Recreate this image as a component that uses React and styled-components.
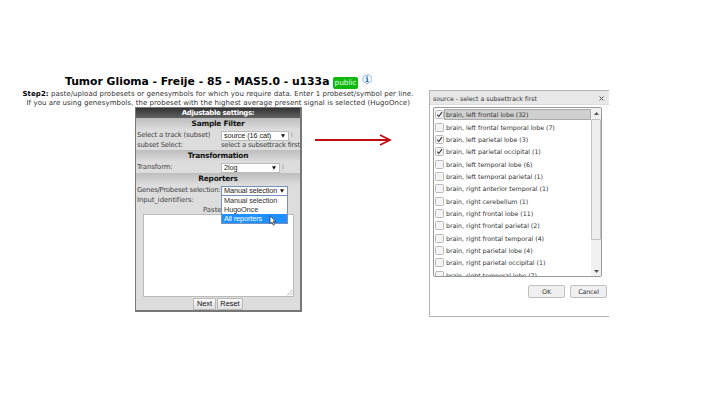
import React from 'react';
import styled, { createGlobalStyle } from 'styled-components';

const GlobalStyle = createGlobalStyle`
  * { box-sizing: border-box; }
  body { margin: 0; background: #fff; overflow: hidden; font-family: "DejaVu Sans", Verdana, sans-serif; }
`;

const Page = styled.main`
  width: 720px;
  height: 416px;
  display: flex;
  align-items: flex-start;
  white-space: nowrap;
`;
const StepColumn = styled.section`
  width: 300px;
  margin-left: 15px;
  padding-top: 73px;
  display: flex;
  flex-direction: column;
`;
const TitleRow = styled.header`
  height: 17px;
  margin-left: 50px;
  display: flex;
  align-items: center;
`;
const Title = styled.h1`
  margin: 0;
  font-size: 10.8px;
  line-height: 17px;
  width: 265px;
  flex: none;
`;
const Badge = styled.span`
  flex: none;
  width: 25px;
  height: 12px;
  margin: 2px 4px 0 3px;
  border-radius: 2px;
  background: #0eb80e;
  color: #e4ffe2;
  font-size: 7.4px;
  line-height: 12px;
  text-align: center;
  letter-spacing: -0.05px;
`;
const InfoIcon = styled.svg`
  flex: none;
  width: 10px;
  height: 11px;
  margin-bottom: 4px;
`;
const Line = styled.p`
  margin: 0 0 0 ${p => p.$indent}px;
  height: 8.6px;
  line-height: 9.6px;
  font-size: 7px;
  color: #333;
  letter-spacing: 0.058px;
  b { color: #000; }
`;
const Panel = styled.form`
  width: 167px;
  height: 205px;
  margin: 0 0 0 120px;
  border: 1px solid #777;
  border-width: 1px 2px 2px 1px;
  background: #ddd;
  display: flex;
  flex-direction: column;
`;
const Heading = styled.h2`
  margin: 0;
  flex: none;
  height: ${p => (p.$dark ? 10 : 12)}px;
  line-height: ${p => (p.$dark ? 10 : 12)}px;
  text-align: center;
  font-size: ${p => (p.$dark ? 7 : 7.4)}px;
  letter-spacing: ${p => (p.$dark ? -0.36 : -0.22)}px;
  color: ${p => (p.$dark ? '#fff' : '#111')};
  background: ${p => (p.$dark ? 'linear-gradient(#333, #626262)' : 'linear-gradient(#bdbdbd, #ddd)')};
`;
const Field = styled.div`
  flex: none;
  height: ${p => p.$h}px;
  padding-left: 1px;
  display: flex;
  align-items: center;
  font-size: 6.9px;
  line-height: 9px;
  color: #444;
`;
const Label = styled.label`
  width: 84px;
  flex: none;
  letter-spacing: ${p => p.$track ?? -0.2}px;
`;
const Value = styled.span`
  letter-spacing: -0.24px;
`;
const Hint = styled.span`
  color: #888;
`;
const Select = styled.div`
  position: relative;
  flex: none;
  width: ${p => p.$w}px;
  height: 10px;
  margin-right: 2px;
  padding: 0 3px 0 2px;
  border: 1px solid ${p => (p.$focus ? '#7890bd' : '#bbb')};
  background: #fff;
  color: #222;
  font-family: "Liberation Sans", Arial, sans-serif;
  font-size: 7.3px;
  letter-spacing: -0.1px;
  line-height: 8px;
  display: flex;
  align-items: center;
  justify-content: space-between;
`;
const Caret = styled.svg`
  flex: none;
  width: 4px;
  height: 4px;
`;
const Options = styled.ul`
  position: absolute;
  z-index: 2;
  left: -1px;
  top: 8px;
  width: 67px;
  margin: 0;
  padding: 0;
  list-style: none;
  background: #fff;
  border: 1px solid #7890bd;
`;
const Option = styled.li`
  height: 9px;
  padding-left: 2px;
  line-height: 9px;
  color: ${p => (p.$active ? '#fff' : '#333')};
  background: ${p => (p.$active ? '#1e90ff' : '#fff')};
`;
const Pointer = styled.svg`
  position: absolute;
  z-index: 3;
  left: 47px;
  top: 28px;
  width: 8px;
  height: 11px;
`;
const PasteRow = styled.div`
  flex: none;
  height: 9px;
  padding: 1px 0 0 67px;
  font-size: 6.9px;
  line-height: 9px;
  color: #444;
`;
const TextBox = styled.div`
  flex: none;
  width: 151px;
  height: 83px;
  margin: 0 0 0 7px;
  border: 1px solid #bbb;
  background: #fff;
  display: flex;
  align-items: flex-end;
  justify-content: flex-end;
`;
const ButtonRow = styled.div`
  display: flex;
  gap: 1px;
  padding: 1px 0 0 57px;
`;
const PanelButton = styled.button`
  width: ${p => p.$w}px;
  height: 12px;
  padding: 0;
  border: 1px solid #b8b8b8;
  border-radius: 1px;
  background: linear-gradient(#f8f8f8, #e0e0e0);
  color: #111;
  font: 7.4px/10px "Liberation Sans", Arial, sans-serif;
`;
const Arrow = styled.svg`
  flex: none;
  width: 77px;
  height: 14px;
  margin-top: 133px;
`;
const Dialog = styled.aside`
  width: 180px;
  height: 227px;
  margin: 90px 0 0 37px;
  border: 1px solid #b3b3b3;
  border-right: 0;
  background: #fff;
  color: #333;
  flex: none;
`;
const DialogHeader = styled.header`
  height: 14px;
  padding: 1px 5px 0 3px;
  display: flex;
  align-items: center;
  justify-content: space-between;
  background: #e8e8e8;
  border-bottom: 1px solid #ddd;
  font-size: 6.3px;
  letter-spacing: -0.03px;
`;
const ListBox = styled.div`
  width: 169px;
  height: 170px;
  margin: 2px 0 0 3px;
  border: 1px solid #999;
  border-radius: 2px;
  display: flex;
  overflow: hidden;
`;
const List = styled.div`
  width: 157px;
  padding: 0.6px 0 0 1px;
  overflow: hidden;
`;
const Item = styled.div`
  height: 12.35px;
  display: flex;
  align-items: center;
  font-size: 6.3px;
  letter-spacing: -0.03px;
`;
const Check = styled.svg`
  width: 9px;
  height: 9px;
  flex: none;
`;
const ItemText = styled.span`
  flex: none;
  width: 147px;
  height: 11px;
  line-height: 9px;
  padding-left: 1px;
  border: 1px solid ${p => (p.$selected ? '#aaa' : 'transparent')};
  background: ${p => (p.$selected ? '#cfcfcf' : 'transparent')};
`;
const Scrollbar = styled.div`
  width: 10px;
  background: #f1f1f1;
  display: flex;
  flex-direction: column;
  align-items: center;
  justify-content: space-between;
  padding: 4px 0 3px;
`;
const Thumb = styled.div`
  width: 10px;
  height: 121px;
  margin: 2px 0 28px;
  border: 1px solid #c2c2c2;
  border-radius: 1px;
  background: #eee;
`;
const DialogActions = styled.footer`
  display: flex;
  gap: 5px;
  padding: 8px 0 0 98px;
`;
const DialogButton = styled.button`
  width: 37px;
  height: 13px;
  padding: 0;
  border: 1px solid #c0c0c0;
  border-radius: 2px;
  background: #f0f0f0;
  color: #333;
  font: 6.3px/11px "DejaVu Sans", Verdana, sans-serif;
  letter-spacing: -0.1px;
`;

const tracks = [
  ['brain, left frontal lobe (32)', true],
  ['brain, left frontal temporal lobe (7)', false],
  ['brain, left parietal lobe (3)', true],
  ['brain, left parietal occipital (1)', true],
  ['brain, left temporal lobe (6)', false],
  ['brain, left temporal parietal (1)', false],
  ['brain, right anterior temporal (1)', false],
  ['brain, right cerebellum (1)', false],
  ['brain, right frontal lobe (11)', false],
  ['brain, right frontal parietal (2)', false],
  ['brain, right frontal temporal (4)', false],
  ['brain, right parietal lobe (4)', false],
  ['brain, right parietal occipital (1)', false],
  ['brain, right temporal lobe (7)', false],
];

const DownCaret = () => (
  <Caret viewBox="0 0 4 4"><path d="M0 .3h4L2 3.8z" fill="#111" /></Caret>
);

export default function App() {
  return (
    <Page>
      <GlobalStyle />
      <StepColumn>
        <TitleRow>
          <Title>Tumor Glioma - Freije - 85 - MAS5.0 - u133a</Title>
          <Badge>public</Badge>
          <InfoIcon viewBox="0 0 10 11">
            <path d="M5 .9a4.2 4.1 0 1 1 .8 8.1L5 10.4 4.1 9A4.2 4.1 0 0 1 5 .9z" fill="#edf5fc" stroke="#83acd4" strokeWidth=".8" />
            <path d="M5.1 2v1.2M4 4.3h1.3V7.3M3.9 7.5h2.6" fill="none" stroke="#1867b4" strokeWidth="1.1" />
          </InfoIcon>
        </TitleRow>
        <Line $indent={7.5}><b>Step2:</b> paste/upload probesets or genesymbols for which you require data. Enter 1 probeset/symbol per line.</Line>
        <Line $indent={11.5}>If you are using genesymbols, the probeset with the highest average present signal is selected (HugoOnce)</Line>
        <Panel>
          <Heading $dark>Adjustable settings:</Heading>
          <Heading>Sample Filter</Heading>
          <Field $h={11}><Label>Select a track (subset)</Label><Select $w={68}>source (16 cat)<DownCaret /></Select><Hint>i</Hint></Field>
          <Field $h={9}><Label>subset Select:</Label><Value>select a subsettrack first</Value></Field>
          <Heading>Transformation</Heading>
          <Field $h={11}><Label $track={-0.1}>Transform:</Label><Select $w={59}>2log<DownCaret /></Select><Hint>i</Hint></Field>
          <Heading>Reporters</Heading>
          <Field $h={11}>
            <Label $track={-0.25}>Genes/Probeset selection:</Label>
            <Select $w={67} $focus>
              Manual selection<DownCaret />
              <Options>
                <Option>Manual selection</Option>
                <Option>HugoOnce</Option>
                <Option $active>All reporters</Option>
              </Options>
              <Pointer viewBox="0 0 8 11">
                <path d="M1 .8v8l1.9-1.7 1.3 3.1 1.4-.6-1.3-3h2.5z" fill="#fff" stroke="#222" strokeWidth=".7" />
              </Pointer>
            </Select>
          </Field>
          <Field $h={9}><Label $track={-0.08}>Input_identifiers:</Label></Field>
          <PasteRow>Paste</PasteRow>
          <TextBox>
            <svg width="7" height="7" viewBox="0 0 7 7"><path d="M1 6.5L6.5 1M4 6.5L6.5 4" stroke="#999" strokeWidth=".7" /></svg>
          </TextBox>
          <ButtonRow>
            <PanelButton type="button" $w={23}>Next</PanelButton>
            <PanelButton type="button" $w={26}>Reset</PanelButton>
          </ButtonRow>
        </Panel>
      </StepColumn>
      <Arrow viewBox="0 0 77 14">
        <path d="M0 7h74M65 2l10 5-10 5" fill="none" stroke="#c20b12" strokeWidth="1.9" />
      </Arrow>
      <Dialog>
        <DialogHeader>
          source - select a subsettrack first
          <svg width="5" height="5" viewBox="0 0 5 5"><path d="M.5.5l4 4m0-4l-4 4" stroke="#555" strokeWidth="1" /></svg>
        </DialogHeader>
        <ListBox>
          <List>
            {tracks.map(([name, checked], i) => (
              <Item key={name}>
                <Check viewBox="0 0 9 9">
                  <rect x=".5" y=".5" width="8" height="8" rx="1" fill="#f4f4f4" stroke="#b9b9b9" />
                  {checked && <path d="M2.2 4.7l1.6 1.8L7 2.2" fill="none" stroke="#333" strokeWidth="1.1" />}
                </Check>
                <ItemText $selected={i === 0}>{name}</ItemText>
              </Item>
            ))}
          </List>
          <Scrollbar>
            <svg width="5" height="3" viewBox="0 0 5 3"><path d="M0 3h5L2.5 0z" fill="#555" /></svg>
            <Thumb />
            <svg width="5" height="3" viewBox="0 0 5 3"><path d="M0 0h5L2.5 3z" fill="#555" /></svg>
          </Scrollbar>
        </ListBox>
        <DialogActions>
          <DialogButton>OK</DialogButton>
          <DialogButton>Cancel</DialogButton>
        </DialogActions>
      </Dialog>
    </Page>
  );
}
